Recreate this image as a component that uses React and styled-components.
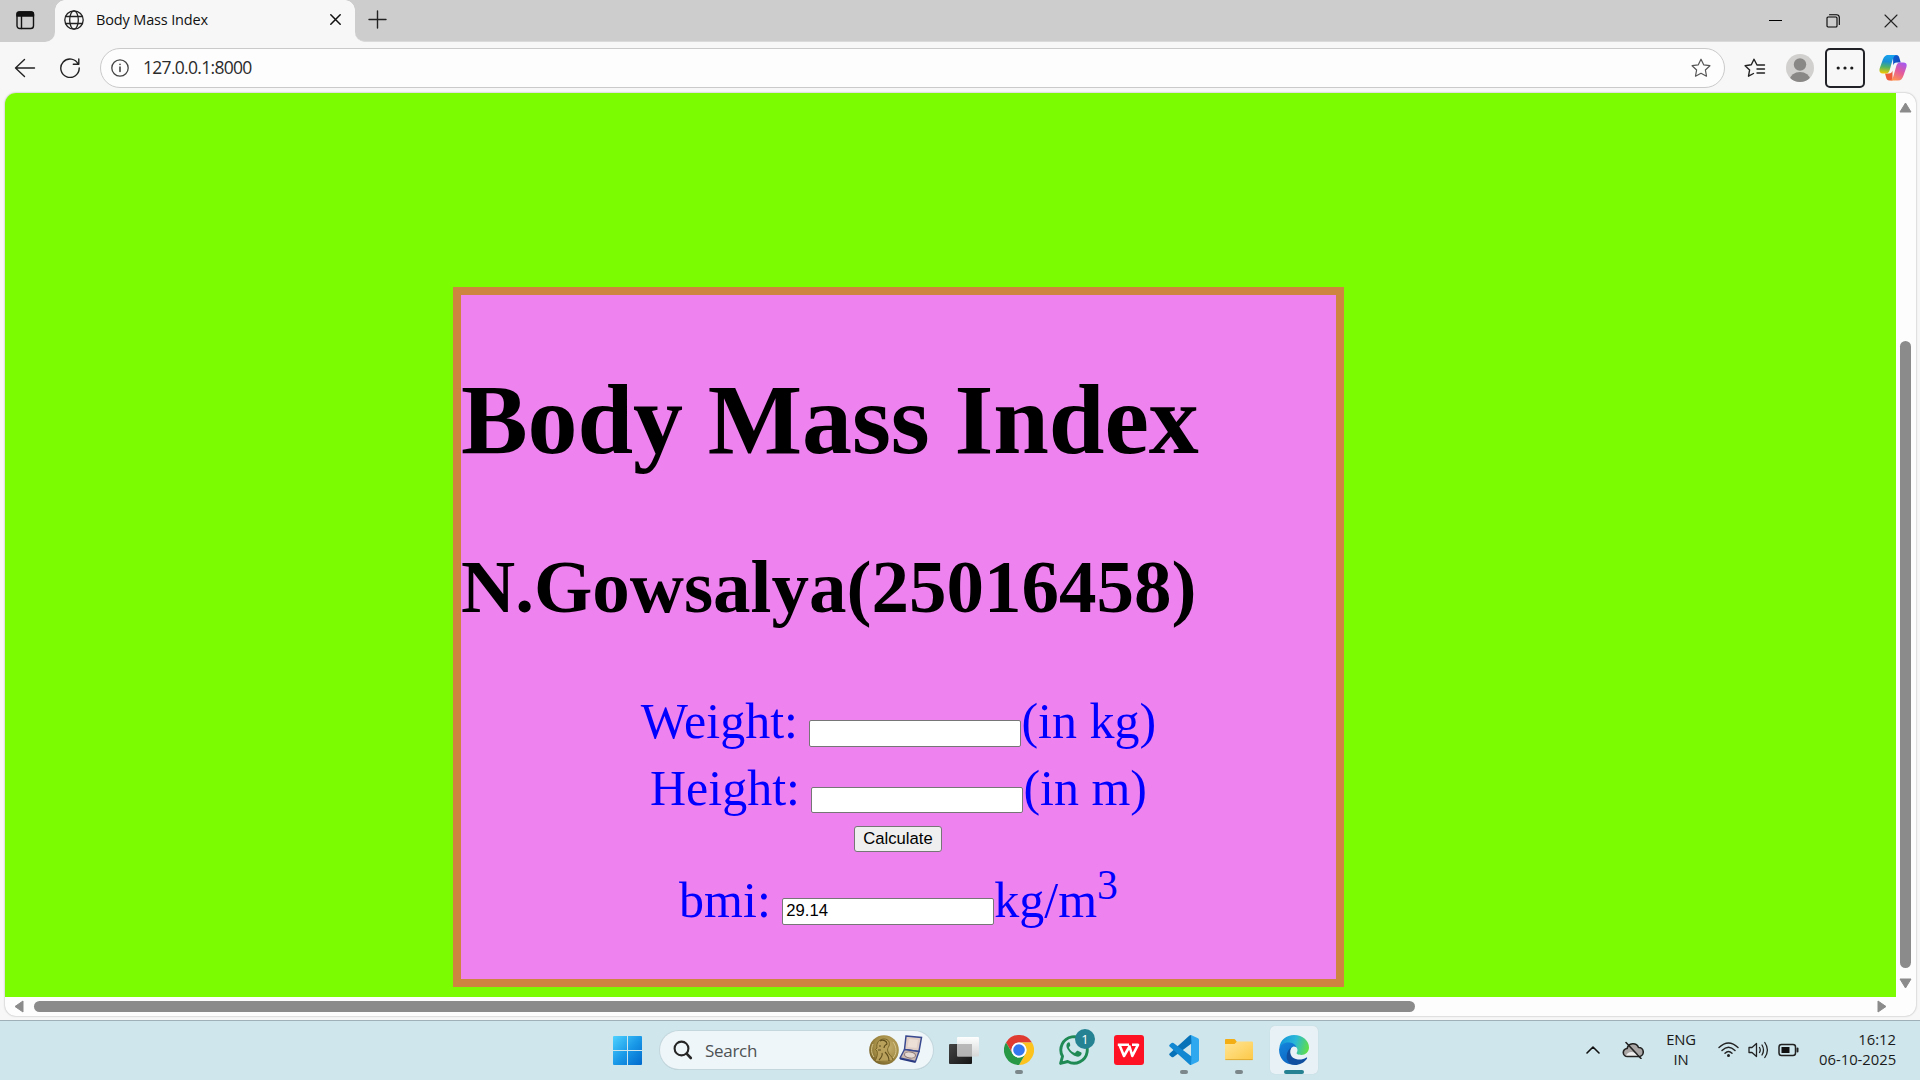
import React from "react";
import styled, { createGlobalStyle } from "styled-components";

const Global = createGlobalStyle`
  * { box-sizing: border-box; }
  html, body { margin: 0; padding: 0; overflow: hidden; }
`;
const ui = `"Segoe UI", "Open Sans", "Noto Sans", sans-serif`;

const Screen = styled.div`
  width: 1920px; height: 1080px; display: flex; flex-direction: column;
  overflow: hidden; background: #f7f7f7; font-family: ${ui}; color: #1a1a1a;
  svg { display: block; flex: none; }
`;

/* Tab strip */
const TitleBar = styled.div`
  height: 42px; flex: none; display: flex; background: #f7f7f7;
`;
const StripStart = styled.div`
  width: 55px; background: #cdcdcd; border-radius: 0 0 10px 0;
  padding: 11px 0 0 16px;
`;
const Tab = styled.div`
  width: 300px; display: flex; align-items: center; padding: 0 14px 3px 9px;
  background: #f7f7f7;
  position: relative;
  &::before, &::after {
    content: ""; position: absolute; top: 0; width: 10px; height: 10px;
  }
  &::before { left: 0; background: radial-gradient(circle at 100% 100%, transparent 9.5px, #cdcdcd 10px); }
  &::after { right: 0; background: radial-gradient(circle at 0 100%, transparent 9.5px, #cdcdcd 10px); }
`;
const TabTitle = styled.div`
  flex: 1; margin-left: 12px; font-size: 14.5px; letter-spacing: -0.15px; white-space: nowrap; color: #111;
`;
const StripRest = styled.div`
  flex: 1; display: flex; justify-content: space-between; background: #cdcdcd;
  border-bottom: 1px solid #dadada; border-radius: 0 0 0 10px; padding-left: 12.5px;
`;
const NewTab = styled.div`padding-top: 10px;`;
const WindowButtons = styled.div`display: flex;`;
const WindowButton = styled.div`
  width: 58px; display: flex; align-items: center; justify-content: center;
`;

/* Address bar */
const Toolbar = styled.div`
  height: 51px; flex: none; display: flex; align-items: center; padding: 0 12px 0 14px;
`;
const NavIcon = styled.div`width: ${(p) => p.$w}px;`;
const Address = styled.div`
  width: 1625px; height: 40px; display: flex; align-items: center; background: #fdfdfd;
  border: 1px solid #cacaca; border-radius: 20px; padding: 0 13px 0 10px;
`;
const Url = styled.div`flex: 1; margin-left: 14px; padding-bottom: 1px; font-size: 17.5px; letter-spacing: -0.7px; color: #2b2b2b;`;
const Actions = styled.div`display: flex; align-items: center; margin-left: 19px;`;
const Avatar = styled.div`margin-left: 20px;`;
const More = styled.div`
  width: 40px; height: 40px; margin: 0 14px 0 11px; border: 2px solid #202228; border-radius: 5px;
  display: flex; align-items: center; justify-content: center;
`;

/* Document viewport */
const Frame = styled.div`
  width: 1911px; height: 923px; flex: none; margin-left: 5px; display: grid;
  grid-template: 904px 19px / 1891px 20px; background: #fdfdfd;
  border-radius: 11px; overflow: hidden; box-shadow: 0 0 2px rgba(0,0,0,.35);
`;
const Page = styled.div`
  background: #7cfc00; padding: 194px 0 0 448px;
  font-family: "Liberation Serif", "Times New Roman", serif;
`;
const Card = styled.div`
  width: 891px; height: 700px; border: 8px solid #cd853f; background: #ee82ee;
  font-size: 50px; display: flow-root; color: #000;
`;
const Title = styled.h1`margin: 67px 0; font-size: 100px; line-height: 115px; letter-spacing: -0.1px; white-space: nowrap;`;
const Author = styled.h2`margin: 0; font-size: 75px; line-height: 86px; white-space: nowrap;`;
const Form = styled.form`margin-top: 62px; color: blue; text-align: center;`;
const Row = styled.div`
  height: ${(p) => p.$h}px; line-height: 58px; white-space: nowrap;
  padding-top: ${(p) => p.$top || 0}px;
  sup { font-size: 41.67px; line-height: 0; vertical-align: 18px; }
`;
const Field = styled.input`
  width: 212px; height: ${(p) => p.$h || 27}px; padding: 1px 3px; border: 1px solid #767676; border-radius: 2px;
  background: #fff; font: 16.67px "Liberation Sans", Arial, sans-serif; color: #000; outline: none;
  vertical-align: ${(p) => p.$lift || "baseline"}; display: inline-block; margin: 0 0 0 -1px;
`;
const Calculate = styled.button`
  display: block; margin: 1px auto 0; width: 88px; height: 26px; padding: 0; border: 1px solid #767676;
  border-radius: 3px; background: #efefef; color: #000; position: relative; left: -0.5px;
  font: 16.67px/22px "Liberation Sans", Arial, sans-serif;
`;
const VScroll = styled.div`
  display: flex; flex-direction: column; align-items: center; padding: 9px 1px 6px 0;
`;
const VThumb = styled.div`
  width: 11px; height: 627px; margin: 227px 0 10px; border-radius: 6px; background: #8b8b8b;
`;
const HScroll = styled.div`display: flex; align-items: center; padding: 0 9px 0 9px;`;
const HThumb = styled.div`
  width: 1381px; height: 11px; margin: 0 auto 0 10px; border-radius: 6px; background: #8b8b8b;
`;

/* Taskbar */
const Taskbar = styled.div`
  height: 60px; margin-top: 4px; flex: none; display: flex; background: #cfe6ec;
  border-top: 1px solid #9fb0b8; padding: 5px 24px 0 603px;
`;
const Slot = styled.div`
  width: 48px; height: 48px; margin-right: 7px; border-radius: 5px; position: relative;
  display: flex; align-items: center; justify-content: center;
  background: ${(p) => (p.$active ? "#e8f2f6" : "transparent")};
  box-shadow: ${(p) => (p.$active ? "0 0 1px #b9cbd1" : "none")};
`;
const Marker = styled.div`
  position: absolute; bottom: 0; left: 50%; transform: translateX(-50%);
  width: ${(p) => (p.$active ? 20 : 8)}px; height: 4px; border-radius: 2px;
  background: ${(p) => (p.$active ? "#258292" : "#7b878b")};
`;
const Badge = styled.div`
  position: absolute; top: 3px; right: 3px; width: 20px; height: 20px; border-radius: 50%;
  background: #258292; color: #fff; font-size: 13px; line-height: 20px; text-align: center;
`;
const Search = styled.div`
  width: 273px; height: 38px; margin: 5px 7px 0 2px; border-radius: 19px; background: #eff6f9;
  box-shadow: 0 0 0 1px #c3d7dd, 0 1px 0 #a5b6bc; display: flex; align-items: center; padding: 0 10px 0 13px;
`;
const SearchText = styled.div`flex: 1; margin-left: 12px; font-size: 17px; letter-spacing: -0.3px; color: #4d5254;`;
const Tray = styled.div`margin-left: auto; height: 48px; display: flex; align-items: center;`;
const TrayIcon = styled.div`margin-right: ${(p) => p.$gap}px;`;
const TrayText = styled.div`
  width: ${(p) => p.$w}px; font-size: 14.8px; line-height: 20px; letter-spacing: ${(p) => p.$ls || 0}px;
  text-align: ${(p) => p.$align}; margin-right: ${(p) => p.$gap || 0}px; white-space: nowrap; padding-bottom: 2px;
`;

const Line = ({ w, h, sw = 1.3, color = "#222", vb, children }) => (
  <svg width={w} height={h} viewBox={vb || `0 0 ${w} ${h}`} fill="none" stroke={color} strokeWidth={sw} strokeLinecap="round" strokeLinejoin="round">{children}</svg>
);
const starPath = "M10 1.2 12.7 6.8 18.9 7.7 14.4 12 15.5 18.2 10 15.3 4.5 18.2 5.6 12 1.1 7.7 7.3 6.8Z";

const Medal = () => (
  <svg width="54" height="32" viewBox="0 0 54 32">
    <defs>
      <radialGradient id="gold" cx=".6" cy=".4" r=".65"><stop offset="0" stopColor="#c9b473" /><stop offset=".65" stopColor="#a38c45" /><stop offset="1" stopColor="#766128" /></radialGradient>
    </defs>
    <circle cx="15" cy="16" r="14.8" fill="url(#gold)" />
    <path d="M6 27C8 23 9 20 8 17L6.500 15.500 8 14C7 9 10 5 15 5c5 0 6 4 5 7-1 2-2 3-1 6 1 3 4 4 5 8" fill="#b9a15c" stroke="#796527" strokeWidth="1" />
    <path d="M11 7c3-2 7 0 7 3-2 1-3 2-3 4M13 19c1 3-1 5-3 7M16 18c3 3 4 6 4 9M10 12h2M9 16h3" stroke="#5f4d1c" strokeWidth="1.1" fill="none" />
    <path d="M4 10c-2 4-2 9 1 13M24 8c4 5 4 12 0 16" stroke="#d6c58a" strokeWidth="1" fill="none" />
    <path d="M37 2 52.500 3.500 50 17.500 35.500 15.500Z" fill="#e0cfc6" stroke="#39498f" strokeWidth="1.5" />
    <path d="M40 5 49 6 47.500 14 38.500 13Z" fill="#ecdfd6" />
    <path d="M35.500 15.500 50 17.500 46.500 27.500 31 24Z" fill="#c8b6b0" stroke="#39498f" strokeWidth="1.4" />
    <path d="M31 24 46.500 27.500 46.500 29 31 25.600Z" fill="#26377f" />
    <ellipse cx="41" cy="21" rx="5.5" ry="3" fill="#e6dad5" stroke="#8a7777" strokeWidth="1" transform="rotate(8 41 21)" />
  </svg>
);

const Copilot = () => (
  <svg width="28" height="26" viewBox="0 0 28 26">
    <defs>
      <linearGradient id="cpa" x1=".4" y1="0" x2=".3" y2="1"><stop offset="0" stopColor="#18a3ee" /><stop offset=".35" stopColor="#1990d5" /><stop offset=".65" stopColor="#54b364" /><stop offset="1" stopColor="#f5c800" /></linearGradient>
      <linearGradient id="cpb" x1=".8" y1="0" x2=".3" y2="1"><stop offset="0" stopColor="#a45af0" /><stop offset=".5" stopColor="#e35a9c" /><stop offset="1" stopColor="#ff934f" /></linearGradient>
      <linearGradient id="cpc" x1="0" y1="0" x2="1" y2="1"><stop offset="0" stopColor="#0b62d6" /><stop offset="1" stopColor="#1742b5" /></linearGradient>
    </defs>
    <path d="M14 0h3c2.500 0 3 1.500 3.700 4l1 3.500h-4c-2 0-3 1-3.500 3z" fill="url(#cpc)" />
    <path d="M13.500 25.500h-3C8 25.500 7.500 24 7 22l-1-3.500h4c2 0 3-1 3.500-3z" fill="#ee5a3a" />
    <path d="M17.500 0H9C6 0 4.500 2.500 3.500 5.500L.8 13c-1 3.500 0 5.500 3 5.500H7c2.200 0 3-1.200 3.700-3.500l3-10.500C14.500 1.800 15.500.3 17.500 0z" fill="url(#cpa)" />
    <path d="M10.500 25.500H19c3 0 4.500-2 5.500-5l2.800-8c1-3.500 0-5-3-5H21c-2.200 0-3 1.200-3.700 3.500l-3 10.500c-.8 2.500-2 4-3.800 4z" fill="url(#cpb)" />
  </svg>
);

const Windows = () => (
  <svg width="29" height="29" viewBox="0 0 29 29">
    <defs><linearGradient id="win" gradientUnits="userSpaceOnUse" x1="0" y1="0" x2="29" y2="29"><stop offset="0" stopColor="#4fd2ff" /><stop offset=".5" stopColor="#1a9ae8" /><stop offset="1" stopColor="#0069cc" /></linearGradient></defs>
    <path fill="url(#win)" d="M1 0h13v14H0V1q0-1 1-1zM15 0h13q1 0 1 1v13H15zM0 15h14v14H1q-1 0-1-1zM15 15h14v13q0 1-1 1H15z" />
  </svg>
);
const TaskView = () => (
  <svg width="30" height="30" viewBox="0 0 30 30">
    <defs><linearGradient id="tva" x2="1" y2="1"><stop stopColor="#444" /><stop offset="1" stopColor="#151515" /></linearGradient>
      <linearGradient id="tvb" x2="0" y2="1"><stop stopColor="#fff" /><stop offset="1" stopColor="#d6d6d6" /></linearGradient></defs>
    <rect x="0" y="9" width="23" height="20" rx="1" fill="url(#tva)" />
    <rect x="8" y="2" width="22" height="19.5" rx="1" fill="url(#tvb)" opacity=".95" />
    <path d="M8 9h15v12.500H9q-1 0-1-1z" fill="#a9a9a9" opacity=".75" />
  </svg>
);
const Chrome = () => (
  <svg width="30" height="30" viewBox="0 0 30 30">
    <path d="M2 7.500A15 15 0 0 1 28 7.500H15A7.500 7.500 0 0 0 8.500 18.750Z" fill="#e03b30" />
    <path d="M28 7.500A15 15 0 0 1 15 30L21.500 18.750A7.500 7.500 0 0 0 15 7.500Z" fill="#fcc31e" />
    <path d="M2 7.500A15 15 0 0 0 15 30L21.500 18.750A7.500 7.500 0 0 1 8.500 18.750Z" fill="#269846" />
    <circle cx="15" cy="15" r="7.5" fill="#fff" /><circle cx="15" cy="15" r="5.8" fill="#3478ef" />
  </svg>
);
const WhatsApp = () => (
  <svg width="30" height="30" viewBox="0 0 30 30">
    <path d="M1.600 28.400 3.500 21.300A13.200 13.200 0 1 1 8.700 26.500Z" fill="none" stroke="#208a55" strokeWidth="2.9" strokeLinejoin="round" />
    <path d="M10.800 7.800c-.6-.9-1.400-.8-2.100-.1C7 9.300 7 11.700 8.600 14.200c2.200 3.600 5.200 6.200 9 7.300 2.200.6 4.800-.7 5-3 .1-.7-.1-.9-.7-1.200l-3.100-1.500c-.6-.3-.9-.1-1.300.4l-1.100 1.400c-.3.4-.7.4-1.200.2-2.200-1-4-2.700-5.200-4.900-.2-.4 0-.7.2-1l.9-1.100c.3-.4.2-.8 0-1.200z" fill="#208a55" />
  </svg>
);
const Wps = () => (
  <svg width="30" height="30" viewBox="0 0 30 30">
    <rect width="30" height="30" rx="3" fill="#fd1122" />
    <path d="M3.800 9.800H15M5.500 9.900 10 21 15.500 11.500 18.300 21 24 9.800H18" fill="none" stroke="#fff" strokeWidth="2.6" strokeLinejoin="round" />
  </svg>
);
const Code = () => (
  <svg width="30" height="30" viewBox="0 0 30 30">
    <path d="M22 0 29 3.200Q30 3.700 30 5V25Q30 26.300 29 26.800L22 30Z" fill="#2fa8f0" />
    <path d="M22 0 22.500 8.500 4.500 22Q3.500 22.700 2.600 22L.6 20.200Q-.2 19.300.6 18.500L20.500.5Q21 0 22 0Z" fill="#0872b9" />
    <path d="M22 30 22.500 21.500 4.500 8Q3.500 7.300 2.600 8L.6 9.800Q-.2 10.700.6 11.500L20.500 29.500Q21 30 22 30Z" fill="#1287d2" />
  </svg>
);
const Folder = () => (
  <svg width="28" height="30" viewBox="0 0 28 30">
    <defs><linearGradient id="fold" x2="1" y2="1"><stop stopColor="#ffe596" /><stop offset="1" stopColor="#fdc947" /></linearGradient></defs>
    <path d="M0 5Q0 4 1 4H9Q10 4 10.500 5L12 7V10H0Z" fill="#f2ae14" />
    <path d="M0 9H9.500L12 6.500H27Q28 6.500 28 7.500V24Q28 25 27 25H1Q0 25 0 24Z" fill="url(#fold)" />
    <path d="M.4 24.600H27.600" stroke="#dca62c" strokeWidth=".9" />
  </svg>
);
const Edge = () => (
  <svg width="30" height="30" viewBox="0 0 30 30">
    <defs>
      <linearGradient id="eda" x1="0" y1=".4" x2="1" y2=".6"><stop stopColor="#1596dc" /><stop offset=".5" stopColor="#2ab8d8" /><stop offset="1" stopColor="#62df45" /></linearGradient>
      <linearGradient id="edb" x1="0" y1="0" x2=".6" y2="1"><stop stopColor="#1686dc" /><stop offset="1" stopColor="#0a65c2" /></linearGradient>
    </defs>
    <path d="M.3 13C1 5 7.500 0 15 0c9 0 15 6 15 12.500 0 4.500-3.500 7.500-7.700 7.500-3.300 0-5.300-1-4.500-2.400 2.200-3.600-.8-6.800-5-6.800C6 10.800 2 11 .3 13z" fill="url(#eda)" />
    <path d="M.1 14C1.500 9.300 5.500 7 10.500 7.500c4 .4 6.300 2.500 6.700 4.500-2.700-1.600-6.600.5-6.600 5.500 0 6.500 5 10.500 9.400 11C9 32.500-.5 25 .1 14z" fill="url(#edb)" />
    <path d="M12.800 12.300c-3 3.700-2 11.200 6 12.200 3.500.4 6.500-.8 8.200-1.800 1-.6 1.500.1.900 1C25.500 27.500 20.500 30 16 30c-6 0-8.700-5-8.300-9.500.3-4 2.500-6.900 5.100-8.200z" fill="#104f9f" />
  </svg>
);

const apps = [
  { Icon: TaskView }, { Icon: Chrome, running: true }, { Icon: WhatsApp, badge: "1" }, { Icon: Wps },
  { Icon: Code, running: true }, { Icon: Folder, running: true }, { Icon: Edge, running: true, active: true },
];

export default function App() {
  return (
    <Screen>
      <Global />
      <TitleBar>
        <StripStart>
          <Line w={19} h={19} sw={1.4} color="#111"><rect x="1" y="1" width="16.5" height="16.5" rx="2.8" /><path d="M1 2.500Q1 1 3 1h12.500q2 0 2 2V5H1z" fill="#111" /><path d="M5.500 5v12.500" /></Line>
        </StripStart>
        <Tab>
          <Line w={20} h={20} sw={1.3}><circle cx="10" cy="10" r="9.2" /><ellipse cx="10" cy="10" rx="4.3" ry="9.2" /><path d="M1.700 6.500h16.600M1.700 13.500h16.600" /></Line>
          <TabTitle>Body Mass Index</TabTitle>
          <Line w={11} h={11} sw={1.5} color="#111"><path d="M.8.8 10.200 10.200M10.200.8.8 10.200" /></Line>
        </Tab>
        <StripRest>
          <NewTab><Line w={19} h={19} sw={1.4}><path d="M9.500 1v17M1 9.500h17" /></Line></NewTab>
          <WindowButtons>
            <WindowButton><Line w={13} h={13} sw={1} color="#000"><path d="M0 6.500h13" /></Line></WindowButton>
            <WindowButton><Line w={14} h={14} sw={1.1} color="#000"><rect x="1" y="3" width="10" height="10" rx="1" /><path d="M3.500.7H10.500Q13.300.7 13.300 3.500V10.500" /></Line></WindowButton>
            <WindowButton><Line w={14} h={14} sw={1.1}><path d="M1 1 13 13M13 1 1 13" /></Line></WindowButton>
          </WindowButtons>
        </StripRest>
      </TitleBar>

      <Toolbar>
        <NavIcon $w={46}><Line w={22} h={20} sw={1.4}><path d="M20.500 10H1.500M10.500 1.500 1.500 10 10.500 18.500" /></Line></NavIcon>
        <NavIcon $w={40}><Line w={20} h={20} sw={1.4}><path d="M18.300 6.300A9.200 9.200 0 1 0 19.200 10M18.800 1V6.300H13.300" /></Line></NavIcon>
        <Address>
          <Line w={18} h={18} sw={1.3} color="#444"><circle cx="9" cy="9" r="8.2" /><path d="M9 8v4.500M9 5.200v.3" strokeWidth="1.6" /></Line>
          <Url>127.0.0.1:8000</Url>
          <Line w={20} h={20} sw={1.2} color="#555"><path d={starPath} /></Line>
        </Address>
        <Actions>
          <Line w={22} h={20} sw={1.4}><path d="M13 7 10 1.200 7.300 6.800 1.100 7.700 5.600 12 4.500 18.200 9.500 15.500M13 7h7.500M13 11h7.500M13 15h7.500" /></Line>
          <Avatar>
            <svg width="28" height="28" viewBox="0 0 28 28"><defs><clipPath id="av"><circle cx="14" cy="14" r="14" /></clipPath></defs><g clipPath="url(#av)"><rect width="28" height="28" fill="#d2d0ce" /><circle cx="14" cy="10.5" r="6.2" fill="#8a8886" /><ellipse cx="14" cy="25.5" rx="10" ry="7.5" fill="#8a8886" /></g></svg>
          </Avatar>
          <More><svg width="18" height="4" viewBox="0 0 18 4" fill="#1a1a1a"><circle cx="2.2" cy="2" r="1.6" /><circle cx="9" cy="2" r="1.6" /><circle cx="15.8" cy="2" r="1.6" /></svg></More>
          <Copilot />
        </Actions>
      </Toolbar>

      <Frame>
        <Page>
          <Card>
            <Title>Body Mass Index</Title>
            <Author>N.Gowsalya(25016458)</Author>
            <Form>
              <Row $h={67}>Weight: <Field readOnly />(in kg)</Row>
              <Row $h={66}>Height: <Field readOnly $h={26} />(in m)</Row>
              <Calculate type="button">Calculate</Calculate>
              <Row $h={80} $top={19}>bmi: <Field readOnly value="29.14" $lift="1px" />kg/m<sup>3</sup></Row>
            </Form>
          </Card>
        </Page>
        <VScroll>
          <svg width="13" height="12" viewBox="0 0 13 12"><path d="M6.500 1 12 10H1z" fill="#8b8b8b" stroke="#8b8b8b" strokeLinejoin="round" /></svg>
          <VThumb />
          <svg width="13" height="12" viewBox="0 0 13 12"><path d="M6.500 10 12 1H1z" fill="#8b8b8b" stroke="#8b8b8b" strokeLinejoin="round" /></svg>
        </VScroll>
        <HScroll>
          <svg width="10" height="13" viewBox="0 0 10 13"><path d="M1 6.500 9 1V12z" fill="#8b8b8b" stroke="#8b8b8b" strokeLinejoin="round" /></svg>
          <HThumb />
          <svg width="10" height="13" viewBox="0 0 10 13"><path d="M9 6.500 1 1V12z" fill="#8b8b8b" stroke="#8b8b8b" strokeLinejoin="round" /></svg>
        </HScroll>
      </Frame>

      <Taskbar>
        <Slot><Windows /></Slot>
        <Search>
          <Line w={20} h={20} sw={2.1} color="#262626"><circle cx="8.5" cy="8.5" r="6.9" /><path d="M13.600 13.600 17.800 18" strokeWidth="2.6" /></Line>
          <SearchText>Search</SearchText>
          <Medal />
        </Search>
        {apps.map(({ Icon, running, active, badge }, i) => (
          <Slot key={i} $active={active}>
            <Icon />
            {badge && <Badge>{badge}</Badge>}
            {running && <Marker $active={active} />}
          </Slot>
        ))}
        <Tray>
          <TrayIcon $gap={22}><Line w={14} h={8} sw={1.6} color="#111"><path d="M1 7 7 1 13 7" /></Line></TrayIcon>
          <TrayIcon $gap={20}>
            <Line w={22} h={18} sw={1.6} color="#222"><path d="M5.500 15.500a4 4 0 0 1-.4-8A6 6 0 0 1 16.500 6.500a4.500 4.500 0 0 1 .5 9z" fill="#aaa6a5" /><path d="M4 14.500C6 10 11 9.500 18 14.500z" fill="#eee" stroke="none" /><path d="M4 1.500 19 17.500" /></Line>
          </TrayIcon>
          <TrayText $w={34} $align="center" $gap={20} $ls={-0.2}>ENG<br />IN</TrayText>
          <TrayIcon $gap={9}>
            <Line w={21} h={16} sw={1.4}><path d="M1 5.500Q10.500-3.500 20 5.500M4 8.500Q10.500 2 17 8.500M7 11.300Q10.500 7.800 14 11.300" /><circle cx="10.5" cy="13.5" r="1.5" fill="#222" stroke="none" /></Line>
          </TrayIcon>
          <TrayIcon $gap={9}>
            <Line w={21} h={18} sw={1.3}><path d="M1 6.500H4L8.500 2.500V15.500L4 11.500H1ZM11.500 6.500Q13 9 11.500 11.500M14 4Q17 9 14 14M16.800 1.500Q22 9 16.800 16.500" /></Line>
          </TrayIcon>
          <TrayIcon $gap={20}>
            <Line w={21} h={14} sw={1.5}><rect x="1" y="1.5" width="16.5" height="11" rx="2.5" /><rect x="3.5" y="4" width="8" height="6" fill="#111" stroke="none" /><path d="M19.500 5.500v3" strokeWidth="2" /></Line>
          </TrayIcon>
          <TrayText $w={77} $align="right">16:12<br />06-10-2025</TrayText>
        </Tray>
      </Taskbar>
    </Screen>
  );
}
